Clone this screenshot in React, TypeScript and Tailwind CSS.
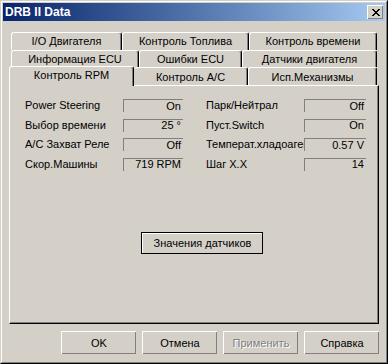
import React from "react";

type TabDef = { label: string; w: string; noLeft?: boolean };

const row1: TabDef[] = [
  { label: "I/O Двигателя", w: "w-[111px]" },
  { label: "Контроль Топлива", w: "w-[127px]" },
  { label: "Контроль времени", w: "w-[128px]" },
];

const row2: TabDef[] = [
  { label: "Информация ECU", w: "w-[128px]" },
  { label: "Ошибки ECU", w: "w-[103px]" },
  { label: "Датчики двигателя", w: "w-[135px]" },
];

const row3: TabDef[] = [
  { label: "Контроль A/C", w: "w-[114px]", noLeft: true },
  { label: "Исп.Механизмы", w: "w-[129px]" },
];

const leftFields = [
  { label: "Power Steering", value: "On" },
  { label: "Выбор времени", value: "25 °" },
  { label: "A/C Захват Реле", value: "Off" },
  { label: "Скор.Машины", value: "719 RPM" },
];

const rightFields = [
  { label: "Парк/Нейтрал", value: "Off" },
  { label: "Пуст.Switch", value: "On" },
  { label: "Температ.хладоагент", value: "0.57 V" },
  { label: "Шаг X.X", value: "14" },
];

function Tab({ tab, className }: { tab: TabDef; className?: string }) {
  return (
    <div
      className={`${tab.w} ${className ?? ""} flex h-full items-center justify-center whitespace-nowrap rounded-t-[3px] border-t border-white ${
        tab.noLeft ? "" : "border-l"
      } border-r border-r-black shadow-[inset_-1px_0_0_#808080]`}
    >
      {tab.label}
    </div>
  );
}

function Field({ label, value, boxW }: { label: string; value: string; boxW: string }) {
  return (
    <div className="flex h-[13px] items-center">
      <span className="w-[98px] overflow-hidden whitespace-nowrap">{label}</span>
      <div
        className={`${boxW} flex h-[13px] items-center justify-end border-t border-l border-[#808080] border-r-white border-b-white pr-[2px]`}
      >
        {value}
      </div>
    </div>
  );
}

function Button({ label, disabled }: { label: string; disabled?: boolean }) {
  return (
    <div className="flex h-[23px] w-[75px] items-center justify-center border-t border-l border-white border-r-black border-b-black shadow-[inset_-1px_-1px_0_#808080]">
      <span className={disabled ? "text-[#808080] [text-shadow:1px_1px_0_#fff]" : ""}>
        {label}
      </span>
    </div>
  );
}

function CloseGlyph() {
  return (
    <svg width="8" height="7" viewBox="0 0 8 7" shapeRendering="crispEdges">
      <g fill="#000">
        <rect x="0" y="0" width="2" height="1" />
        <rect x="6" y="0" width="2" height="1" />
        <rect x="1" y="1" width="2" height="1" />
        <rect x="5" y="1" width="2" height="1" />
        <rect x="2" y="2" width="4" height="1" />
        <rect x="3" y="3" width="2" height="1" />
        <rect x="2" y="4" width="4" height="1" />
        <rect x="1" y="5" width="2" height="1" />
        <rect x="5" y="5" width="2" height="1" />
        <rect x="0" y="6" width="2" height="1" />
        <rect x="6" y="6" width="2" height="1" />
      </g>
    </svg>
  );
}

export default function App() {
  return (
    <div className="h-[364px] w-[388px] border border-[#d4d0c8] border-r-black border-b-black bg-[#d4d0c8] font-['Liberation_Sans',Arial,sans-serif] text-[11px] leading-none text-black">
      <div className="flex h-full flex-col border border-white border-r-[#808080] border-b-[#808080] p-[1px]">
        {/* title bar */}
        <div className="flex h-[18px] items-center justify-between bg-gradient-to-r from-[#0a246a] to-[#a6caf0] pl-[2px] pr-[2px]">
          <span className="text-[12px] font-bold text-white">DRB II Data</span>
          <div className="flex h-[14px] w-[16px] items-center justify-center border-t border-l border-white border-r-black border-b-black bg-[#d4d0c8] shadow-[inset_-1px_-1px_0_#808080]">
            <CloseGlyph />
          </div>
        </div>

        {/* tabs */}
        <div className="mt-[11px] ml-[8px] flex h-[18px]">
          {row1.map((t) => (
            <Tab key={t.label} tab={t} />
          ))}
        </div>
        <div className="ml-[8px] flex h-[17px]">
          {row2.map((t) => (
            <Tab key={t.label} tab={t} />
          ))}
        </div>
        <div className="ml-[6px] flex h-[18px] items-end">
          <div className="relative z-10 -mb-[1px] flex h-[20px] w-[125px] items-center justify-center rounded-t-[3px] border-t border-l border-white border-r border-r-black bg-[#d4d0c8] pb-[2px] shadow-[inset_-1px_0_0_#808080]">
            Контроль RPM
          </div>
          {row3.map((t) => (
            <Tab key={t.label} tab={t} className="pt-[1px]" />
          ))}
        </div>

        {/* panel */}
        <div className="ml-[6px] flex h-[239px] w-[370px] flex-col border border-white border-r-black border-b-black pt-[13px] pl-[15px] shadow-[inset_-1px_-1px_0_#808080]">
          <div className="flex gap-[23px]">
            <div className="flex flex-col gap-[6.5px]">
              {leftFields.map((f) => (
                <Field key={f.label} label={f.label} value={f.value} boxW="w-[60px]" />
              ))}
            </div>
            <div className="flex flex-col gap-[6.5px]">
              {rightFields.map((f) => (
                <Field key={f.label} label={f.label} value={f.value} boxW="w-[62px]" />
              ))}
            </div>
          </div>
          <div className="mt-[61.5px] ml-[116px] h-[22px] w-[122px] border border-black">
            <div className="flex h-full w-full items-center justify-center border-t border-l border-white border-r-[#808080] border-b-[#808080]">
              Значения датчиков
            </div>
          </div>
        </div>

        {/* dialog buttons */}
        <div className="mt-[7px] ml-[58px] flex gap-[6px]">
          <Button label="OK" />
          <Button label="Отмена" />
          <Button label="Применить" disabled />
          <Button label="Справка" />
        </div>
      </div>
    </div>
  );
}
